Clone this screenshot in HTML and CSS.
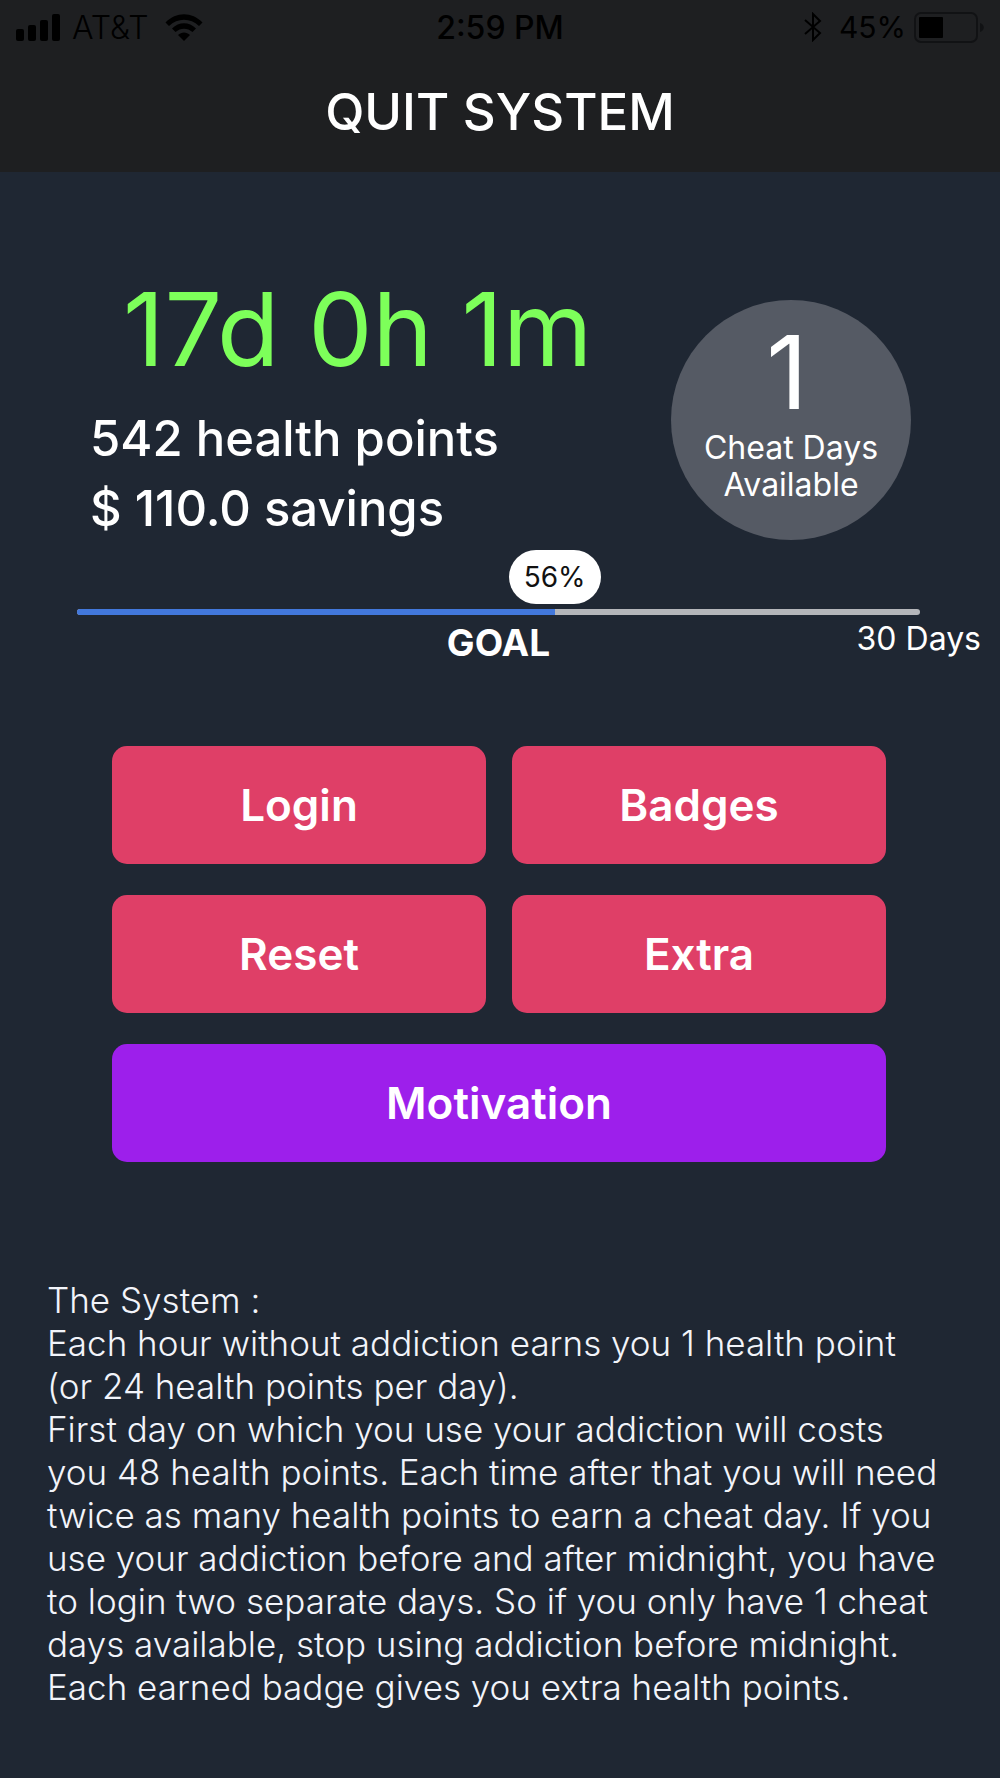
FILE: index.html
```
<!DOCTYPE html>
<html lang="en">
  <head>
    <meta charset="UTF-8" />
    <meta name="viewport" content="width=device-width, initial-scale=1.0" />
    <title>Quit System</title>
    <link rel="stylesheet" href="styles.css">
  </head>
  <body>
    <header>
      <div class="status-bar">
        <div class="status-left">
          <svg viewBox="0 0 44 27" width="44" height="27" aria-hidden="true">
            <rect x="0" y="15" width="8" height="12" rx="2" />
            <rect x="12" y="11" width="8" height="16" rx="2" />
            <rect x="24" y="6" width="8" height="21" rx="2" />
            <rect x="36" y="0" width="8" height="27" rx="2" />
          </svg>
          <span class="carrier">AT&amp;T</span>
          <svg viewBox="0 0 38 27" width="38" height="27" aria-hidden="true">
            <path d="M0.5 8.5C11 -2.5 27 -2.5 37.5 8.5L34 12C25.500 3.500 12.500 3.500 4 12Z" />
            <path d="M7 14.500C14 7.500 24 7.500 31 14.500L27.500 18C22.500 13.500 15.500 13.500 10.500 18Z" />
            <path d="M13 21C16.500 17.500 21.500 17.500 25 21L19 27Z" />
          </svg>
        </div>
        <div class="status-time">2:59 PM</div>
        <div class="status-right">
          <svg class="bluetooth" viewBox="0 0 20 30" width="20" height="30" aria-hidden="true">
            <path d="M2 8L17 21L10 28V2L17 9L2 22" fill="none" stroke="#000" stroke-width="2" />
          </svg>
          <span class="battery-level">45%</span>
          <svg viewBox="0 0 70 31" width="70" height="31" aria-hidden="true">
            <rect x="1" y="1" width="62" height="29" rx="6" fill="none" stroke="#111214" stroke-width="2" />
            <rect x="5" y="5" width="24" height="21" rx="1" />
            <path d="M66 11C71 12 71 19 66 20Z" fill="#111214" />
          </svg>
        </div>
      </div>
      <h1>QUIT SYSTEM</h1>
    </header>

    <main>
      <section class="summary">
        <div class="stats">
          <div class="timer">17d 0h 1m</div>
          <p>542 health points</p>
          <p>$ 110.0 savings</p>
        </div>
        <div class="cheat-days">
          <div class="cheat-count">1</div>
          <div class="cheat-label">Cheat Days<br />Available</div>
        </div>
      </section>

      <section class="goal">
        <progress id="goal-progress" value="17" max="30"></progress>
        <div class="bubble" style="left: calc(100% * 17 / 30)">56%</div>
        <div class="goal-labels">
          <label for="goal-progress">GOAL</label>
          <span class="goal-days">30 Days</span>
        </div>
      </section>

      <div class="buttons">
        <button>Login</button>
        <button>Badges</button>
        <button>Reset</button>
        <button>Extra</button>
        <button class="motivation">Motivation</button>
      </div>

      <p class="rules">
        The System :<br />
        Each hour without addiction earns you 1 health point<br />
        (or 24 health points per day).<br />
        First day on which you use your addiction will costs<br />
        you 48 health points. Each time after that you will need<br />
        twice as many health points to earn a cheat day. If you<br />
        use your addiction before and after midnight, you have<br />
        to login two separate days. So if you only have 1 cheat<br />
        days available, stop using addiction before midnight.<br />
        Each earned badge gives you extra health points.
      </p>
    </main>
  </body>
</html>
```
FILE: styles.css
```
* {
  box-sizing: border-box;
}

body {
  margin: 0;
  background-color: #1f2733;
  color: #fff;
  font-family: Inter, "Liberation Sans", sans-serif;
}

header {
  height: 172px;
  background-color: #1e1f21;
}

.status-bar {
  display: grid;
  grid-template-columns: 1fr auto 1fr;
  align-items: center;
  height: 54px;
  padding: 0 16px;
  color: #000;
  font-size: 32px;
}

.status-left,
.status-right {
  display: flex;
  align-items: center;
}

.status-left {
  gap: 12px;
}

.status-right {
  justify-content: flex-end;
  gap: 8px;
}

.bluetooth {
  margin-right: 8px;
}

.carrier {
  padding-right: 4px;
  font-weight: 300;
}

.battery-level {
  font-size: 30px;
}

.status-time {
  font-weight: 500;
}

h1 {
  margin: 26px 0 0;
  font-size: 51px;
  font-weight: 500;
  line-height: 64px;
  text-align: center;
}

main {
  padding: 105px 47px 60px;
}

.summary {
  display: flex;
  justify-content: space-between;
  padding: 0 42px 0 43px;
}

.timer {
  padding-left: 33px;
  color: #7dff5a;
  font-size: 102px;
  line-height: 104px;
}

.stats p {
  margin: 0;
  font-size: 49px;
  font-weight: 500;
  line-height: 70px;
}

.stats .timer {
  margin-bottom: 23px;
}

.cheat-days {
  width: 240px;
  height: 240px;
  margin-top: 23px;
  padding-top: 20px;
  border-radius: 50%;
  background-color: #555a64;
  text-align: center;
}

.cheat-count {
  margin-bottom: 5px;
  padding-right: 8px;
  font-size: 102px;
  line-height: 104px;
}

.cheat-label {
  font-size: 32px;
  line-height: 37px;
}

.goal {
  position: relative;
  margin: 65px 33px 0 30px;
}

progress {
  display: block;
  width: 100%;
  height: 6px;
  border: none;
  border-radius: 3px;
  background-color: #b4b6ba;
  overflow: hidden;
  -webkit-appearance: none;
  appearance: none;
}

progress::-webkit-progress-bar {
  background-color: #b4b6ba;
}

progress::-webkit-progress-value {
  background-color: #4278dc;
}

.bubble {
  position: absolute;
  bottom: 100%;
  width: 92px;
  margin-bottom: 5px;
  border-radius: 27px;
  background-color: #fff;
  color: #111;
  font-size: 28px;
  line-height: 54px;
  text-align: center;
  transform: translateX(-50%);
}

/* runs past both ends of the bar */
.goal-labels {
  display: grid;
  grid-template-columns: 1fr auto 1fr;
  height: 60px;
  margin: 0 -61px;
}

.goal-labels label {
  grid-column: 2;
  font-size: 37px;
  font-weight: 700;
  line-height: 56px;
}

.goal-days {
  justify-self: end;
  font-size: 32px;
  line-height: 48px;
}

.buttons {
  display: grid;
  grid-template-columns: 1fr 1fr;
  gap: 31px 26px;
  margin: 71px 67px 0 65px;
}

button {
  height: 118px;
  border: none;
  border-radius: 15px;
  background-color: #df3f67;
  color: #fff;
  font-family: inherit;
  font-size: 44px;
  font-weight: 600;
}

.motivation {
  grid-column: 1 / 3;
  background-color: #9d1feb;
}

.rules {
  margin: 117px 0 0;
  color: #f2f4fa;
  font-size: 35px;
  font-weight: 300;
  line-height: 43px;
  white-space: nowrap;
}
```
